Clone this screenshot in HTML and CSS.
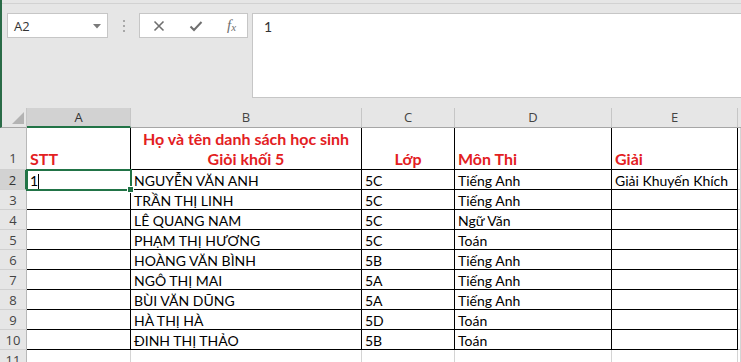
FILE: index.html
```html
<!DOCTYPE html>
<html lang="vi">
<head>
    <meta charset="UTF-8">
    <title>Danh sách học sinh giỏi</title>
    <link rel="stylesheet" href="styles.css">
</head>
<body>
    <div class="window">
        <div class="topline"></div>
        <div class="toolbar">
            <div class="namebox">
                <span>A2</span>
                <svg class="drop" width="8" height="5" viewBox="0 0 8 5"><path d="M0 0H8L4 4.5Z" fill="#7a7a7a"/></svg>
            </div>
            <div class="grip"><i></i><i></i><i></i></div>
            <div class="fbuttons">
                <svg width="12" height="12" viewBox="0 0 12 12"><path d="M1.5 1.5L10.5 10.5M10.5 1.5L1.5 10.5" stroke="#6f6f6f" stroke-width="1.6"/></svg>
                <svg width="14" height="12" viewBox="0 0 14 12"><path d="M1.5 6.5L5 10L12.5 2" fill="none" stroke="#6f6f6f" stroke-width="2"/></svg>
                <span class="fx">f<sub>x</sub></span>
            </div>
            <div class="formula">1</div>
        </div>
    </div>

    <div class="sheet">
        <div class="corner"><svg width="12" height="12" viewBox="0 0 12 12"><path d="M12 0V12H0Z" fill="#b3b3b3"/></svg></div>
        <div class="ch on">A</div>
        <div class="ch">B</div>
        <div class="ch">C</div>
        <div class="ch">D</div>
        <div class="ch">E</div>
        <div class="ch end"></div>

        <div class="rh tall">1</div>
        <div class="c tall title">STT</div>
        <div class="c tall title mid">Họ và tên danh sách học sinh<br>Giỏi khối 5</div>
        <div class="c tall title mid">Lớp</div>
        <div class="c tall title">Môn Thi</div>
        <div class="c tall title">Giải</div>
        <div class="g"></div>

        <div class="rh on">2</div>
        <div class="c sel">1<span class="caret"></span></div>
        <div class="c">NGUYỄN VĂN ANH</div>
        <div class="c">5C</div>
        <div class="c">Tiếng Anh</div>
        <div class="c">Giải Khuyến Khích</div>
        <div class="g"></div>

        <div class="rh">3</div>
        <div class="c"></div>
        <div class="c">TRẦN THỊ LINH</div>
        <div class="c">5C</div>
        <div class="c">Tiếng Anh</div>
        <div class="c"></div>
        <div class="g"></div>

        <div class="rh">4</div>
        <div class="c"></div>
        <div class="c">LÊ QUANG NAM</div>
        <div class="c">5C</div>
        <div class="c">Ngữ Văn</div>
        <div class="c"></div>
        <div class="g"></div>

        <div class="rh">5</div>
        <div class="c"></div>
        <div class="c">PHẠM THỊ HƯƠNG</div>
        <div class="c">5C</div>
        <div class="c">Toán</div>
        <div class="c"></div>
        <div class="g"></div>

        <div class="rh">6</div>
        <div class="c"></div>
        <div class="c">HOÀNG VĂN BÌNH</div>
        <div class="c">5B</div>
        <div class="c">Tiếng Anh</div>
        <div class="c"></div>
        <div class="g"></div>

        <div class="rh">7</div>
        <div class="c"></div>
        <div class="c">NGÔ THỊ MAI</div>
        <div class="c">5A</div>
        <div class="c">Tiếng Anh</div>
        <div class="c"></div>
        <div class="g"></div>

        <div class="rh">8</div>
        <div class="c"></div>
        <div class="c">BÙI VĂN DŨNG</div>
        <div class="c">5A</div>
        <div class="c">Tiếng Anh</div>
        <div class="c"></div>
        <div class="g"></div>

        <div class="rh">9</div>
        <div class="c"></div>
        <div class="c">HÀ THỊ HÀ</div>
        <div class="c">5D</div>
        <div class="c">Toán</div>
        <div class="c"></div>
        <div class="g"></div>

        <div class="rh">10</div>
        <div class="c"></div>
        <div class="c">ĐINH THỊ THẢO</div>
        <div class="c">5B</div>
        <div class="c">Toán</div>
        <div class="c"></div>
        <div class="g"></div>

        <div class="rh">11</div>
        <div class="g"></div>
        <div class="g"></div>
        <div class="g"></div>
        <div class="g"></div>
        <div class="g"></div>
        <div class="g"></div>
    </div>
</body>
</html>
```
FILE: styles.css
```css
body {
    margin: 0;
    background: #e6e6e6;
    font-family: "Open Sans", "Noto Sans", sans-serif;
    overflow: hidden;
}

.window {
    border-left: 2px solid #2a6b47;
}

.topline {
    height: 3px;
    border-bottom: 1px solid #d2d2d2;
}

.toolbar {
    height: 104px;
    display: flex;
    align-items: flex-start;
    padding-top: 9px;
    box-sizing: border-box;
}

.namebox {
    width: 101px;
    height: 25px;
    margin-left: 5px;
    background: #fff;
    border: 1px solid #c6c6c6;
    box-sizing: border-box;
    display: flex;
    align-items: center;
    justify-content: space-between;
    padding: 0 6px 0 6px;
    font-size: 13px;
    color: #333;
}

.drop {
    margin-top: 1px;
}

.grip {
    width: 31px;
    height: 25px;
    display: flex;
    flex-direction: column;
    align-items: center;
    justify-content: center;
    gap: 3px;
}

.grip i {
    width: 2px;
    height: 2px;
    background: #a8a8a8;
}

.fbuttons {
    width: 109px;
    height: 25px;
    background: #fff;
    border: 1px solid #c6c6c6;
    box-sizing: border-box;
    display: flex;
    align-items: center;
    padding-left: 13px;
    gap: 24px;
}

.fx {
    font-family: "Liberation Serif", serif;
    font-style: italic;
    font-size: 15px;
    color: #6f6f6f;
    margin-left: 0;
}

.fx sub {
    font-size: 11px;
    vertical-align: baseline;
    position: relative;
    top: 1px;
}

.formula {
    flex: 1;
    height: 85px;
    margin-left: 4px;
    background: #fff;
    border: 1px solid #c6c6c6;
    border-right: none;
    box-sizing: border-box;
    padding: 4px 0 0 11px;
    font-family: "Lato", "Open Sans", sans-serif;
    font-size: 14px;
    color: #333;
}

/* grid */

.sheet {
    display: grid;
    grid-template-columns: 27px 104px 231px 93px 157px 126px 1fr;
    grid-template-rows: 20px 42px repeat(10, 20px);
    background: #fff;
    font-family: "Lato", "Open Sans", sans-serif;
    font-size: 14px;
    color: #000;
}

.sheet > div {
    box-sizing: border-box;
    white-space: nowrap;
    overflow: hidden;
}

.corner {
    background: #e6e6e6;
    border-left: 2px solid #2a6b47;
    border-right: 1px solid #c6c6c6;
    border-bottom: 1px solid #a6a6a6;
    display: flex;
    align-items: flex-end;
    justify-content: flex-end;
    padding: 0 2px 3px 0;
}

.ch {
    background: #e6e6e6;
    border-right: 1px solid #c6c6c6;
    border-bottom: 1px solid #a6a6a6;
    text-align: center;
    font-family: "Open Sans", sans-serif;
    font-size: 13px;
    line-height: 19px;
    color: #444;
}

.ch.on {
    background: #d2d2d2;
    border-bottom: 2px solid #217346;
    color: #333;
}

.ch.end {
    border-right: none;
}

.rh {
    background: #e6e6e6;
    border-right: 1px solid #b8b8b8;
    border-bottom: 1px solid #d0d0d0;
    text-align: center;
    font-family: "Open Sans", sans-serif;
    font-size: 13px;
    line-height: 20px;
    color: #444;
}

.rh.on {
    background: #d2d2d2;
    border-right: 2px solid #217346;
    color: #333;
}

.rh.tall {
    display: flex;
    align-items: flex-end;
    justify-content: center;
    padding-bottom: 1px;
}

.c {
    border-right: 1px solid #000;
    border-bottom: 1px solid #000;
    padding: 2px 0 0 3px;
    line-height: 17px;
}

.c.tall {
    display: flex;
    flex-direction: column;
    justify-content: flex-end;
    padding: 0 0 0 3px;
    line-height: 20px;
}

.title {
    color: #e3201f;
    font-weight: bold;
    font-size: 16px;
}

.title.mid {
    text-align: center;
    align-items: center;
    padding-left: 0;
}

.g {
    border-right: 1px solid #d4d4d4;
    border-bottom: 1px solid #d4d4d4;
}

.sel {
    position: relative;
    z-index: 1;
    outline: 2px solid #217346;
    outline-offset: -1px;
    overflow: visible !important;
}

.sel::after {
    content: "";
    position: absolute;
    right: -4px;
    bottom: -4px;
    width: 5px;
    height: 5px;
    background: #217346;
    border: 1px solid #fff;
}

.caret {
    display: inline-block;
    width: 1px;
    height: 15px;
    background: #000;
    vertical-align: -3px;
}
```
